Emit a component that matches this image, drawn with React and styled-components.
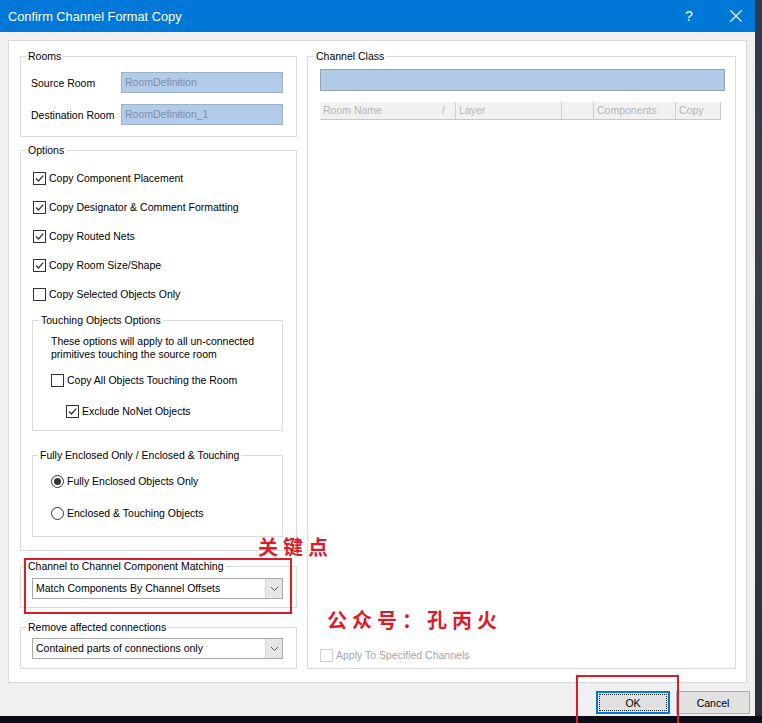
import styled, { createGlobalStyle } from "styled-components";

const GlobalStyle = createGlobalStyle`
  html, body {
    margin: 0;
    padding: 0;
    background: #0b0c16;
  }
  body {
    font-family: "Liberation Sans", Arial, sans-serif;
  }
`;

const Screen = styled.div`
  display: flex;
  width: 762px;
  height: 723px;
  overflow: hidden;
  position: relative;
`;

const Window = styled.div`
  width: 755px;
  height: 716px;
  background: #f0f0f0;
  display: flex;
  flex-direction: column;
  position: relative;
  flex: none;
`;

const SideStrip = styled.div`
  width: 7px;
  height: 716px;
  background: linear-gradient(#2d3a4c, #3a4048 40%, #2b2f38);
`;

const TitleBar = styled.div`
  height: 32px;
  background: #0078d7;
  color: #fff;
  display: flex;
  align-items: center;
  padding-left: 8px;
  font-size: 12.8px;
  flex: none;
`;

const TitleText = styled.div`
  flex: 1;
`;

const TitleButton = styled.div`
  width: ${(p) => p.w}px;
  height: 32px;
  display: flex;
  align-items: center;
  justify-content: center;
  font-size: 14px;
`;

const Body = styled.div`
  flex: 1;
  padding: 8px 8px 0 8px;
  display: flex;
  flex-direction: column;
`;

const Panel = styled.div`
  height: 643px;
  box-sizing: border-box;
  border: 1px solid #dadada;
  background: #fff;
  display: flex;
  gap: 10px;
  padding: 8px 10px 0 11px;
`;

const Column = styled.div`
  width: 277px;
  display: flex;
  flex-direction: column;
`;

const Group = styled.fieldset`
  margin: ${(p) => p.mt || 0}px 0 0 0;
  min-width: 0;
  border: 1px solid #dcdcdc;
  padding: ${(p) => p.pad};
  font-size: 10.5px;
  color: #000;
  display: flex;
  flex-direction: column;
`;

const Legend = styled.legend`
  font-size: 10.5px;
  line-height: 14px;
  padding: 0 2px;
  margin-left: ${(p) => p.ml || 0}px;
  color: #000;
`;

const FieldRow = styled.div`
  display: flex;
  align-items: center;
  height: 21px;
  margin-top: ${(p) => p.mt || 0}px;
`;

const FieldLabel = styled.div`
  width: 90px;
`;

const FieldBox = styled.div`
  width: 162px;
  height: 21px;
  box-sizing: border-box;
  background: #b2cbe8;
  border: 1px solid #9fb1c6;
  color: #7b8fab;
  line-height: 19px;
  padding-left: 3px;
`;

const CheckRow = styled.label`
  display: flex;
  align-items: center;
  height: 13px;
  line-height: 13px;
  margin-top: ${(p) => p.mt || 0}px;
  margin-left: ${(p) => p.ml || 0}px;
  color: ${(p) => (p.disabled ? "#a6a6a6" : "#000")};
  gap: 3px;
  white-space: nowrap;
`;

const Box = styled.span`
  width: 13px;
  height: 13px;
  box-sizing: border-box;
  border: 1px solid ${(p) => (p.disabled ? "#cfcfcf" : "#333")};
  background: #fff;
  display: inline-flex;
  flex: none;
`;

const Round = styled.span`
  width: 13px;
  height: 13px;
  box-sizing: border-box;
  border: 1px solid #333;
  border-radius: 50%;
  background: #fff;
  display: inline-flex;
  align-items: center;
  justify-content: center;
  flex: none;
`;

const Dot = styled.span`
  width: 7px;
  height: 7px;
  border-radius: 50%;
  background: #333;
`;

const Note = styled.div`
  line-height: 13px;
`;

const Combo = styled.div`
  height: 21px;
  box-sizing: border-box;
  border: 1px solid #a8a8a8;
  background: #fff;
  display: flex;
  align-items: stretch;
`;

const ComboText = styled.div`
  flex: 1;
  line-height: 19px;
  padding-left: 3px;
`;

const ComboButton = styled.div`
  width: 16px;
  background: #e6e6e6;
  border-left: 1px solid #d6d6d6;
  display: flex;
  align-items: center;
  justify-content: center;
`;

const ClassGroup = styled(Group)`
  width: 429px;
  height: 620px;
  box-sizing: border-box;
  align-self: flex-start;
`;

const ClassBar = styled.div`
  height: 22px;
  box-sizing: border-box;
  background: #b0cae8;
  border: 1px solid #8ea1b7;
`;

const Header = styled.div`
  margin-top: 11px;
  width: 401px;
  height: 18px;
  box-sizing: border-box;
  background: #f1f1f1;
  border-bottom: 1px solid #c8c8c8;
  border-right: 1px solid #c8c8c8;
  display: flex;
  color: #b5b5b5;
`;

const HeadCell = styled.div`
  width: ${(p) => p.w}px;
  box-sizing: border-box;
  border-right: 1px solid #d0d0d0;
  padding-left: 3px;
  line-height: 17px;
  display: flex;
  justify-content: space-between;
  padding-right: ${(p) => (p.sort ? 10 : 0)}px;
  &:last-child {
    border-right: none;
  }
`;

const Spacer = styled.div`
  flex: 1;
`;

const ButtonBar = styled.div`
  display: flex;
  justify-content: flex-end;
  gap: 6px;
  padding: 8px 0 0;
  margin-right: -3px;
`;

const Button = styled.div`
  width: 74px;
  height: 23px;
  box-sizing: border-box;
  background: #e1e1e1;
  border: ${(p) => (p.primary ? "2px solid #0078d7" : "1px solid #adadad")};
  display: flex;
  align-items: center;
  justify-content: center;
  font-size: 10.5px;
  padding: ${(p) => (p.primary ? "1px" : "2px")};
`;

const Focus = styled.div`
  width: 100%;
  height: 100%;
  box-sizing: border-box;
  border: ${(p) => (p.on ? "1px dotted #222" : "none")};
  display: flex;
  align-items: center;
  justify-content: center;
`;

const Mark = styled.div`
  position: absolute;
  left: ${(p) => p.x}px;
  top: ${(p) => p.y}px;
  width: ${(p) => p.w}px;
  height: ${(p) => p.h}px;
  border: 2px solid #dc1c2c;
  box-sizing: border-box;
  pointer-events: none;
`;

const Annotation = styled.div`
  position: absolute;
  left: ${(p) => p.x}px;
  top: ${(p) => p.y}px;
  font-family: "Noto Sans CJK SC", sans-serif;
  font-weight: 700;
  font-size: 20px;
  letter-spacing: 5px;
  line-height: 22px;
  color: #dc1c2c;
  white-space: nowrap;
`;

const Check = ({ checked, disabled, label, mt, ml }) => (
  <CheckRow mt={mt} ml={ml} disabled={disabled}>
    <Box disabled={disabled}>
      {checked && (
        <svg width="11" height="11" viewBox="0 0 11 11">
          <path d="M2 5.5 L4.5 8 L9.2 2.6" fill="none" stroke="#333" strokeWidth="1.3" />
        </svg>
      )}
    </Box>
    {label}
  </CheckRow>
);

const Radio = ({ checked, label, mt, ml }) => (
  <CheckRow mt={mt} ml={ml}>
    <Round>{checked && <Dot />}</Round>
    {label}
  </CheckRow>
);

const Chevron = () => (
  <svg width="9" height="6" viewBox="0 0 9 6">
    <path d="M1 1 L4.5 4.5 L8 1" fill="none" stroke="#555" strokeWidth="1" />
  </svg>
);

const Dropdown = ({ value }) => (
  <Combo>
    <ComboText>{value}</ComboText>
    <ComboButton>
      <Chevron />
    </ComboButton>
  </Combo>
);

export default function App() {
  return (
    <Screen>
      <GlobalStyle />
      <Window>
        <TitleBar>
          <TitleText>Confirm Channel Format Copy</TitleText>
          <TitleButton w={46}>?</TitleButton>
          <TitleButton w={38} style={{ marginLeft: 5 }}>
            <svg width="12" height="12" viewBox="0 0 12 12">
              <path d="M0.5 0.5 L11.5 11.5 M11.5 0.5 L0.5 11.5" stroke="#fff" strokeWidth="1.1" />
            </svg>
          </TitleButton>
        </TitleBar>
        <Body>
          <Panel>
            <Column>
              <Group pad="9px 13px 11px 10px">
                <Legend ml={-5}>Rooms</Legend>
                <FieldRow>
                  <FieldLabel>Source Room</FieldLabel>
                  <FieldBox>RoomDefinition</FieldBox>
                </FieldRow>
                <FieldRow mt={11}>
                  <FieldLabel>Destination Room</FieldLabel>
                  <FieldBox>RoomDefinition_1</FieldBox>
                </FieldRow>
              </Group>

              <Group mt={6} pad="15px 13px 13px 11px">
                <Legend ml={-6}>Options</Legend>
                <Check checked label="Copy Component Placement" ml={1} />
                <Check checked label="Copy Designator & Comment Formatting" mt={16} ml={1} />
                <Check checked label="Copy Routed Nets" mt={16} ml={1} />
                <Check checked label="Copy Room Size/Shape" mt={16} ml={1} />
                <Check label="Copy Selected Objects Only" mt={16} ml={1} />

                <Group mt={12} pad="8px 12px 12px 18px">
                  <Legend ml={-12}>Touching Objects Options</Legend>
                  <Note>
                    These options will apply to all un-connected
                    <br />
                    primitives touching the source room
                  </Note>
                  <Check label="Copy All Objects Touching the Room" mt={13} />
                  <Check checked label="Exclude NoNet Objects" mt={18} ml={15} />
                </Group>

                <Group mt={17} pad="13px 12px 16px 18px">
                  <Legend ml={-13}>Fully Enclosed Only / Enclosed &amp; Touching</Legend>
                  <Radio checked label="Fully Enclosed Objects Only" />
                  <Radio label="Enclosed & Touching Objects" mt={19} />
                </Group>
              </Group>

              <Group mt={8} pad="5px 13px 8px 11px">
                <Legend ml={-6}>Channel to Channel Component Matching</Legend>
                <Dropdown value="Match Components By Channel Offsets" />
              </Group>

              <Group mt={12} pad="4px 13px 9px 11px">
                <Legend ml={-6}>Remove affected connections</Legend>
                <Dropdown value="Contained parts of connections only" />
              </Group>
            </Column>

            <ClassGroup pad="6px 10px 6px 12px">
              <Legend ml={-6}>Channel Class</Legend>
              <ClassBar />
              <Header>
                <HeadCell w={136} sort>
                  <span>Room Name</span>
                  <span>/</span>
                </HeadCell>
                <HeadCell w={106}>Layer</HeadCell>
                <HeadCell w={32} />
                <HeadCell w={82}>Components</HeadCell>
                <HeadCell w={44}>Copy</HeadCell>
              </Header>
              <Spacer />
              <Check disabled label="Apply To Specified Channels" />
            </ClassGroup>
          </Panel>

          <ButtonBar>
            <Button primary>
              <Focus on>OK</Focus>
            </Button>
            <Button>
              <Focus>Cancel</Focus>
            </Button>
          </ButtonBar>
        </Body>

        <Mark x={24} y={558} w={268} h={56} />
        <Mark x={576} y={675} w={103} h={52} />
        <Annotation x={258} y={536}>关键点</Annotation>
        <Annotation x={327} y={609}>公众号：孔丙火</Annotation>
      </Window>
      <SideStrip />
    </Screen>
  );
}
